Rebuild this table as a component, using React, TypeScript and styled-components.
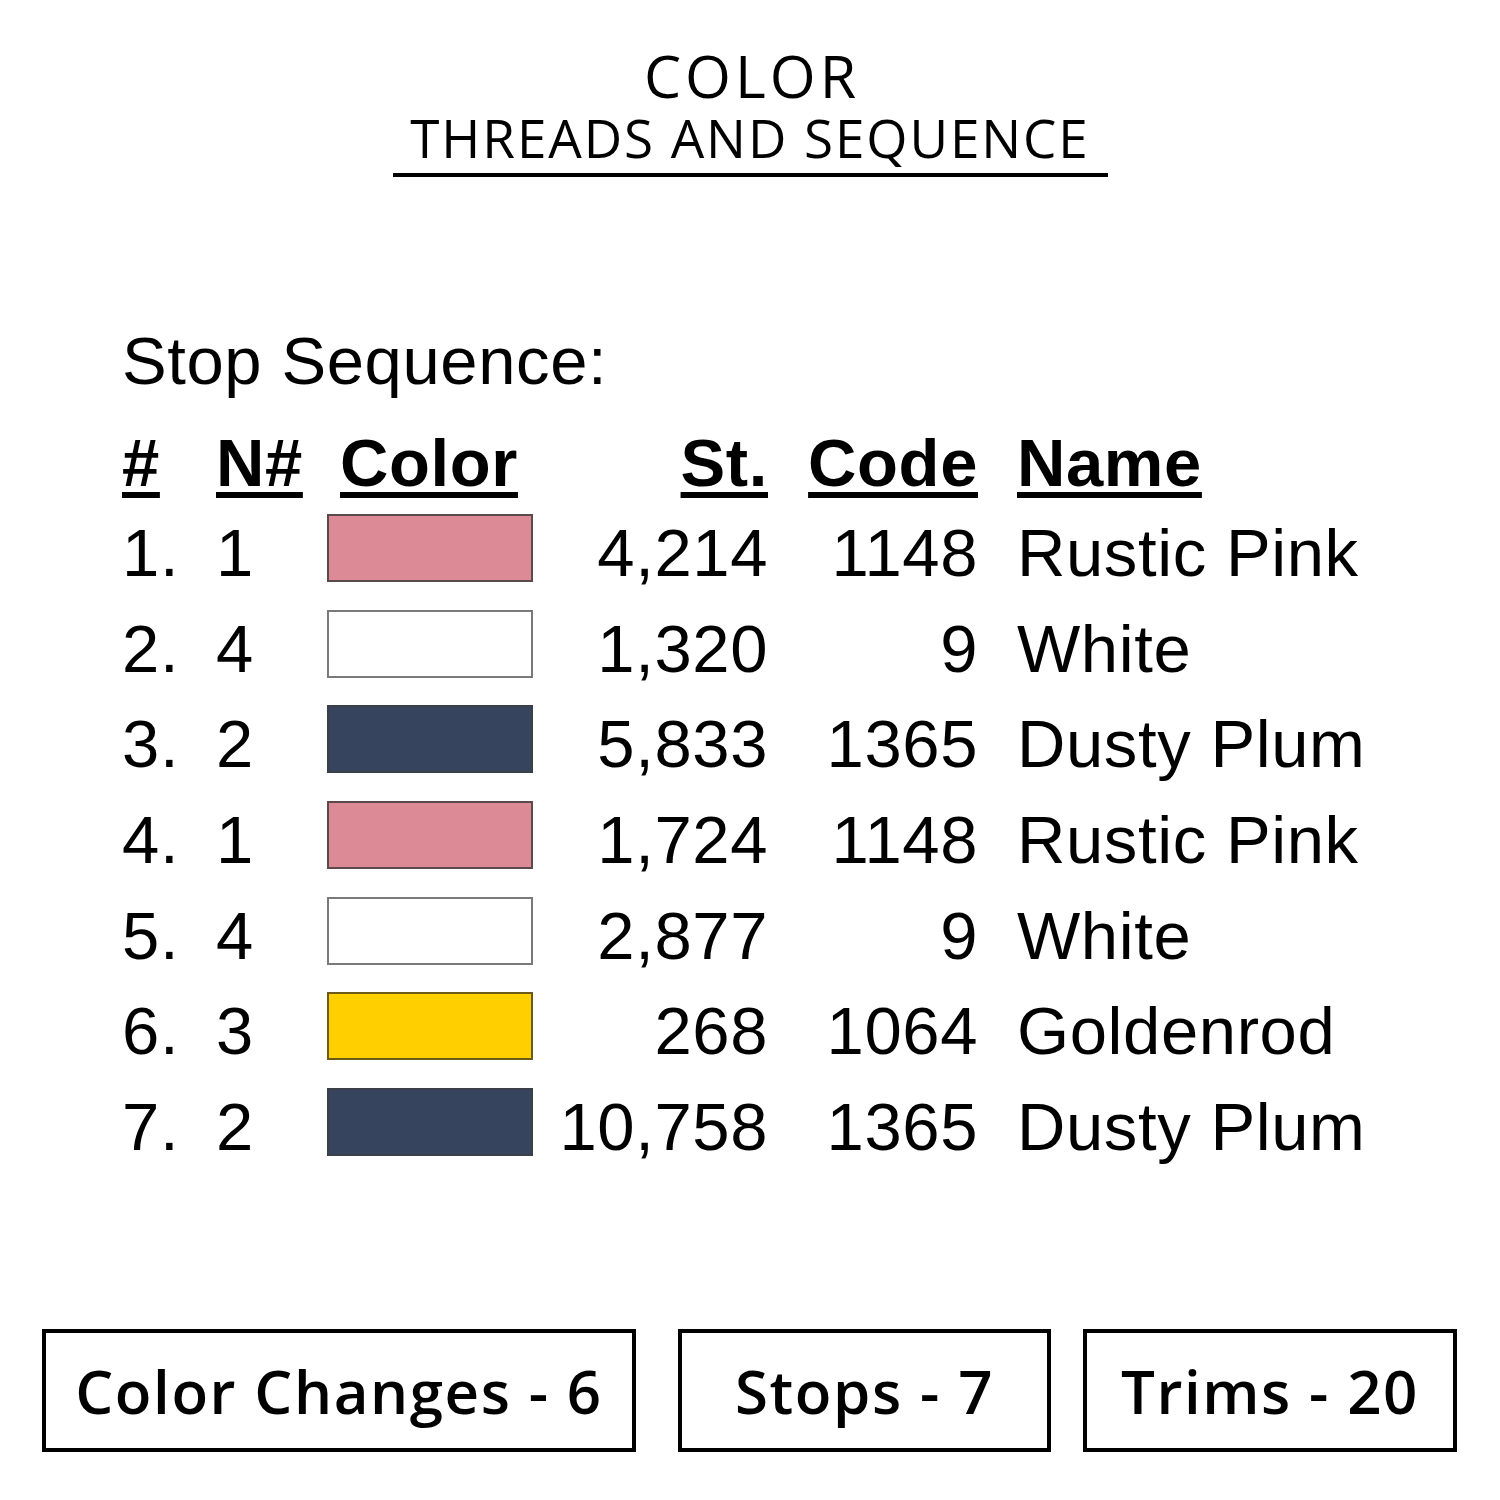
import React from "react"
import styled, { createGlobalStyle } from "styled-components"

const GlobalStyle = createGlobalStyle`
  html, body {
    margin: 0;
    padding: 0;
    background: #ffffff;
  }
`

type Stop = {
  n: number
  needle: number
  color: string
  border: string
  stitches: string
  code: string
  name: string
}

const stops: Stop[] = [
  { n: 1, needle: 1, color: "#db8a96", border: "#5a4a4c", stitches: "4,214", code: "1148", name: "Rustic Pink" },
  { n: 2, needle: 4, color: "#ffffff", border: "#7a7a7a", stitches: "1,320", code: "9", name: "White" },
  { n: 3, needle: 2, color: "#36445e", border: "#3a3f48", stitches: "5,833", code: "1365", name: "Dusty Plum" },
  { n: 4, needle: 1, color: "#db8a96", border: "#5a4a4c", stitches: "1,724", code: "1148", name: "Rustic Pink" },
  { n: 5, needle: 4, color: "#ffffff", border: "#7a7a7a", stitches: "2,877", code: "9", name: "White" },
  { n: 6, needle: 3, color: "#ffcf00", border: "#6b5a1a", stitches: "268", code: "1064", name: "Goldenrod" },
  { n: 7, needle: 2, color: "#36445e", border: "#3a3f48", stitches: "10,758", code: "1365", name: "Dusty Plum" },
]

const App = () => {
  return (
    <Page>
      <GlobalStyle />
      <Header>
        <Title>COLOR</Title>
        <Subtitle>THREADS AND SEQUENCE</Subtitle>
      </Header>

      <Sheet>
        <SheetTitle>Stop Sequence:</SheetTitle>
        <Table>
          <HeadCell>#</HeadCell>
          <HeadCell>N#</HeadCell>
          <HeadCell $indent>Color</HeadCell>
          <HeadCell $right>St.</HeadCell>
          <HeadCell $right>Code</HeadCell>
          <HeadCell $name>Name</HeadCell>
          {stops.map((s) => (
            <React.Fragment key={s.n}>
              <Cell>{s.n}.</Cell>
              <Cell>{s.needle}</Cell>
              <Swatch $fill={s.color} $edge={s.border} />
              <Cell $right>{s.stitches}</Cell>
              <Cell $right>{s.code}</Cell>
              <Cell $name>{s.name}</Cell>
            </React.Fragment>
          ))}
        </Table>
      </Sheet>

      <Stats>
        <Stat $width={594} $offset={0}>Color Changes - 6</Stat>
        <Stat $width={373} $offset={42}>Stops - 7</Stat>
        <Stat $width={374} $offset={32}>Trims - 20</Stat>
      </Stats>
    </Page>
  )
}

export default App

const Page = styled.div`
  width: 1500px;
  height: 1500px;
  display: flex;
  flex-direction: column;
  background: #ffffff;
  color: #000000;
  overflow: hidden;
`

const Header = styled.div`
  display: flex;
  flex-direction: column;
  align-items: center;
  padding-top: 47px;
  font-family: "Open Sans", "Noto Sans", sans-serif;
`

const Title = styled.div`
  font-size: 59px;
  line-height: 56px;
  font-weight: 500;
  letter-spacing: 4px;
  padding-left: 4px;
`

const Subtitle = styled.div`
  width: 715px;
  margin-top: 10px;
  padding-bottom: 10px;
  border-bottom: 4px solid #000;
  text-align: center;
  font-size: 53px;
  line-height: 50px;
  font-weight: 400;
  letter-spacing: 1.9px;
`

const Sheet = styled.div`
  padding-top: 144px;
  padding-left: 122px;
  font-family: "Liberation Sans", Arial, sans-serif;
  font-size: 67px;
  letter-spacing: 0.6px;
`

const SheetTitle = styled.div`
  line-height: 80px;
  margin-bottom: 19px;
`

const Table = styled.div`
  display: grid;
  grid-template-columns: 94px 111px 206px 235px 210px 1fr;
  grid-template-rows: 85px;
  grid-auto-rows: 95.7px;
`

const HeadCell = styled.div<{ $right?: boolean; $indent?: boolean; $name?: boolean }>`
  font-weight: 700;
  line-height: 85px;
  white-space: nowrap;
  text-align: ${(p) => (p.$right ? "right" : "left")};
  padding-left: ${(p) => (p.$indent ? "13px" : p.$name ? "39px" : "0")};
  text-decoration: underline;
  text-decoration-thickness: 6px;
  text-underline-offset: 6px;
`

const Cell = styled.div<{ $right?: boolean; $name?: boolean }>`
  line-height: 95.7px;
  white-space: nowrap;
  text-align: ${(p) => (p.$right ? "right" : "left")};
  padding-left: ${(p) => (p.$name ? "39px" : "0")};
`

const Swatch = styled.div<{ $fill: string; $edge: string }>`
  align-self: start;
  box-sizing: border-box;
  width: 206px;
  height: 68px;
  margin-top: 9px;
  background: ${(p) => p.$fill};
  border: 2px solid ${(p) => p.$edge};
`

const Stats = styled.div`
  margin-top: auto;
  padding: 0 0 48px 42px;
  display: flex;
  align-items: stretch;
`

const Stat = styled.div<{ $width: number; $offset: number }>`
  box-sizing: border-box;
  width: ${(p) => p.$width}px;
  height: 123px;
  margin-left: ${(p) => p.$offset}px;
  border: 4px solid #000;
  display: flex;
  align-items: center;
  justify-content: center;
  font-family: "Open Sans", "Noto Sans", sans-serif;
  font-size: 60px;
  font-weight: 600;
  letter-spacing: 1.6px;
  white-space: nowrap;
`
